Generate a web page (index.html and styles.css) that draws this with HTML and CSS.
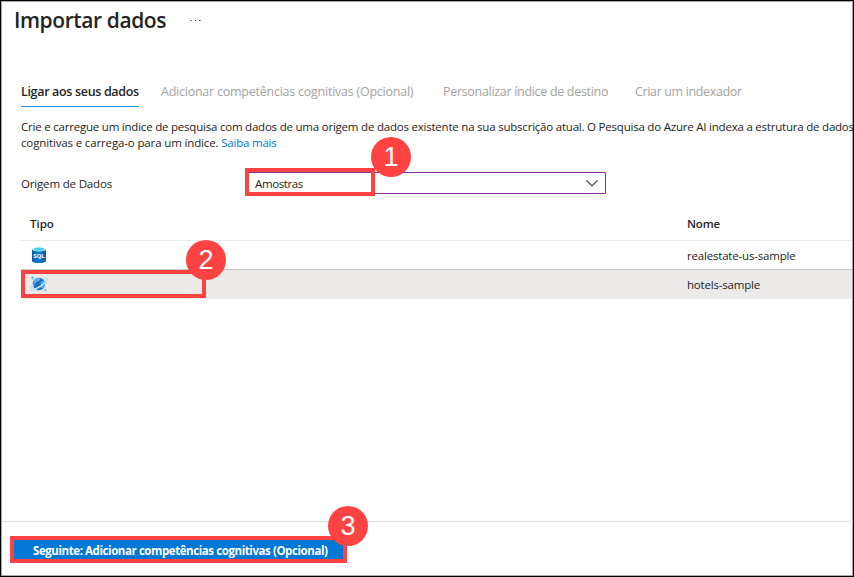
FILE: index.html
```html
<!DOCTYPE html>
<html lang="pt">
<head>
<meta charset="utf-8">
<title>Importar dados</title>
<link rel="stylesheet" href="styles.css">
</head>
<body>
<div class="page">
  <header class="header">
    <h1 class="title">Importar dados</h1>
    <svg class="more" width="12" height="4" viewBox="0 0 12 4"><path d="M.5 2.500h1.200M4.900 2.500h1.200M9.300 2.500h1.200" stroke="#333" stroke-width="1.100"/></svg>
  </header>
  <nav class="tabs">
    <span class="tab tab-active">Ligar aos seus dados</span>
    <span class="tab t-tab2">Adicionar competências cognitivas (Opcional)</span>
    <span class="tab t-tab3">Personalizar índice de destino</span>
    <span class="tab t-tab4">Criar um indexador</span>
  </nav>
  <div class="intro">
    <div class="t-line1">Crie e carregue um índice de pesquisa com dados de uma origem de dados existente na sua subscrição atual. O Pesquisa do Azure AI indexa a estrutura de dados</div>
    <div class="t-line2">cognitivas e carrega-o para um índice. <a class="link">Saiba mais</a></div>
  </div>
  <div class="field">
    <span class="label">Origem de Dados</span>
    <div class="select">
      <span class="value">Amostras</span>
      <svg width="14" height="8" viewBox="0 0 14 8"><path d="M1.200 1.200L7 6.800l5.800-5.600" fill="none" stroke="#555" stroke-width="1.200"/></svg>
      <div class="mark mark-1"></div>
      <div class="badge badge-1">1</div>
    </div>
  </div>
  <div class="table">
    <div class="row head"><span>Tipo</span><span class="t-nome">Nome</span></div>
    <div class="row">
      <svg class="icon" width="18" height="18" viewBox="0 0 18 18">
        <path d="M2 3v11.800c0 1.300 3.100 2.300 7 2.300s7-1 7-2.300V3z" fill="#0762ac"/>
        <path d="M5 4v12.600c1.200.3 2.500.5 4 .5h3V4z" fill="#0876c6"/>
        <ellipse cx="9" cy="3" rx="7" ry="2.400" fill="#e6f7fb"/>
        <ellipse cx="9" cy="3.200" rx="5.200" ry="1.600" fill="#42d4ef"/>
        <text class="sql" x="9" y="12" text-anchor="middle">SQL</text>
      </svg>
      <span class="name name-1">realestate-us-sample</span>
    </div>
    <div class="row selected">
      <svg class="icon planet" width="18" height="18" viewBox="0 0 18 18">
        <circle cx="9" cy="9" r="6.200" fill="#1f6fc6"/>
        <path d="M4 6.500C5 4.300 6.700 3.300 9 3l1.500 1.600-2 1.700-2 .3L5 8.500l-1.600.8zM10.500 7l3.300-1.500c1.200 1.600 1.500 3.200 1.100 5l-2.400 3-2.200-1.200.8-2.800z" fill="#62b4ee"/>
        <path d="M3.500 9.800C1.400 11.700.6 13.200 1.200 14c1.100 1.400 5.200-.2 9.300-2.900 4.300-2.900 7.100-5.900 6.400-7.300-.5-.8-2-.7-4 .1" fill="none" stroke="#7cd3f0" stroke-width="1.700"/>
        <path d="M3.500 9.800C1.400 11.700.6 13.200 1.200 14c1.100 1.400 5.200-.2 9.300-2.900 4.300-2.900 7.100-5.900 6.400-7.300-.5-.8-2-.7-4 .1" fill="none" stroke="#f5fcff" stroke-width=".9"/>
        <path d="M2.500.7l.6 1.600 1.600.6-1.600.6-.6 1.600-.6-1.600L.3 2.900l1.600-.6zM15.400 13.300l.5 1.300 1.300.5-1.300.5-.5 1.300-.5-1.300-1.300-.5 1.300-.5z" fill="#42cce9"/>
      </svg>
      <span class="name name-2">hotels-sample</span>
      <div class="mark mark-2"></div>
      <div class="badge badge-2">2</div>
    </div>
  </div>
  <footer class="footer">
    <div class="button"><span>Seguinte: Adicionar competências cognitivas (Opcional)</span>
      <div class="badge badge-3">3</div>
    </div>
  </footer>
</div>
</body>
</html>
```
FILE: styles.css
```css
* { box-sizing: border-box; }
body { margin: 0; background: #fff; }
.page {
  width: 854px; height: 577px; overflow: hidden;
  display: flex; flex-direction: column;
  border: 1px solid #000;
  box-shadow: inset 0 0 0 1px #a8a8a8;
  font: 11.5px/16px "Open Sans", "Noto Sans", sans-serif;
  color: #252423; white-space: nowrap;
}
.header { display: flex; align-items: center; height: 38px; padding-left: 13px; gap: 24px; }
.title { margin: 0; width: 152px; font-size: 21px; line-height: 28px; font-weight: 600; letter-spacing: -.41px; }
.more { flex: none; }
.tabs { display: flex; align-items: flex-start; height: 69px; padding: 41px 0 0 20px; color: #a3a2a1; font-size: 12.5px; line-height: 24px; }
.tab { flex: none; }
.tab-active { color: #252423; font-weight: 600; width: 118px; height: 27px; border-bottom: 1px solid #2490df; letter-spacing: -.33px; }
.t-tab2 { margin-left: 22px; width: 282px; letter-spacing: -.24px; }
.t-tab3 { width: 192px; letter-spacing: -.31px; }
.t-tab4 { letter-spacing: -.36px; }
.intro { padding: 11px 0 0 20px; height: 55px; }
.t-line1 { letter-spacing: -.215px; }
.t-line2 { letter-spacing: -.14px; }
.link { color: #0078d4; letter-spacing: -.22px; }
.field { display: flex; align-items: center; height: 40px; padding-left: 20px; }
.label { width: 225px; padding-top: 2px; letter-spacing: -.17px; }
.select { position: relative; display: flex; align-items: center; justify-content: space-between; width: 360px; height: 22px; padding: 0 6px 0 8px; border: 1px solid #8a2da5; border-radius: 1px; }
.value { padding-top: 2px; letter-spacing: -.38px; }
.mark { position: absolute; border: 4px solid #ff4343; }
.mark-1 { left: -2px; top: -5px; width: 130px; height: 28px; }
.mark-2 { left: 0; top: 0; width: 185px; height: 28px; }
.badge { position: absolute; width: 40px; height: 40px; border-radius: 50%; background: #ff4343; color: #fff; font: 27px/41px "Liberation Sans", sans-serif; text-align: center; letter-spacing: 0; }
.badge-1 { left: 124px; top: -36px; }
.badge-2 { left: 165px; top: -30px; }
.badge-3 { left: 314px; top: -34px; }
.table { margin: 4px 1px 0 20px; }
.row { position: relative; display: grid; grid-template-columns: 657px 1fr; align-items: center; height: 29px; padding-left: 9px; border-bottom: 1px solid #c8c6c4; }
.head { height: 34px; font-weight: 600; border-color: #eaeaea; }
.t-nome { letter-spacing: -.2px; }
.selected { background: #ebeae9; border: 0; }
.planet { margin-top: -2px; }
.name { letter-spacing: -.19px; }
.name-1 { padding-top: 2px; }
.sql { font: 700 6px "Open Sans", sans-serif; fill: #fff; }
.footer { margin-top: auto; height: 55px; margin-left: 1px; border-top: 1px solid #dcdcdc; padding: 14px 0 0 8px; }
.button { position: relative; width: 337px; height: 27px; border: 4px solid #ff4343; background: #0078d4; color: #fff; font-weight: 700; line-height: 21px; padding-left: 19px; letter-spacing: -.42px; }
```
